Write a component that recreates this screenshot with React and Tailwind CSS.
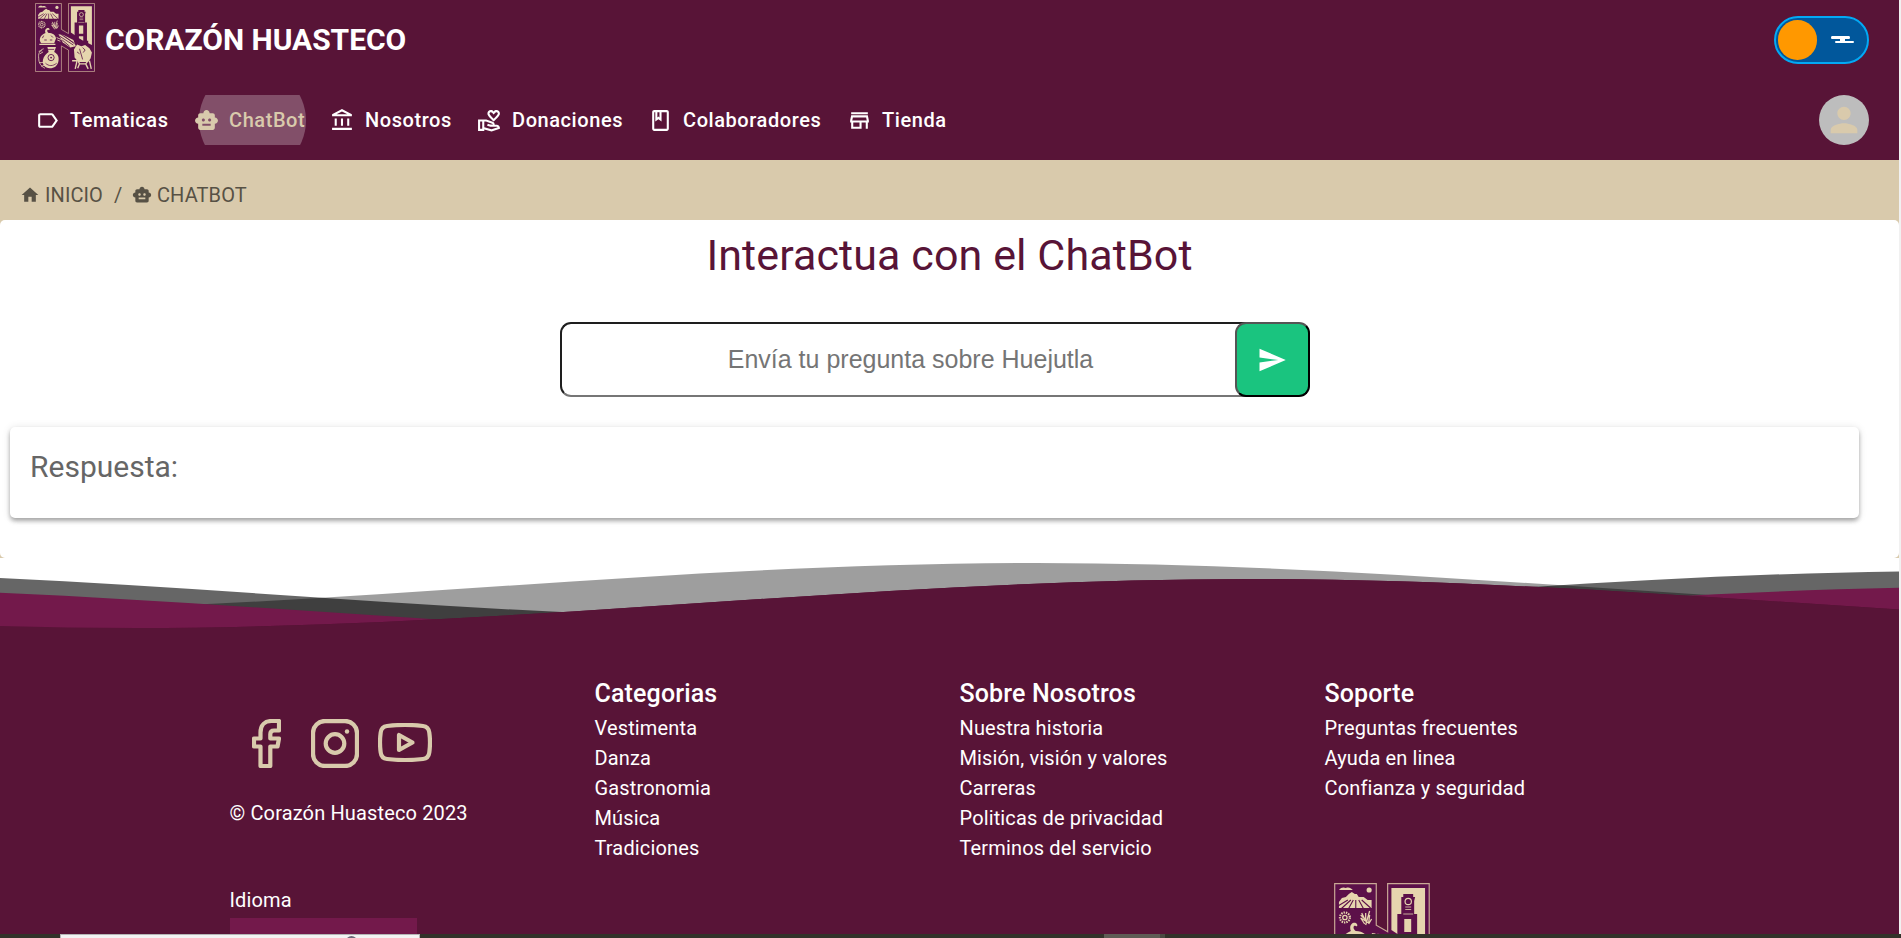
import React from "react";
import {
  MdOutlineLabel,
  MdSmartToy,
  MdOutlineAccountBalance,
  MdOutlineVolunteerActivism,
  MdOutlineClass,
  MdOutlineStore,
  MdSend,
  MdHome,
  MdPerson,
} from "react-icons/md";

const NAV = [
  { label: "Tematicas", Icon: MdOutlineLabel, width: "w-[159px]" },
  { label: "ChatBot", Icon: MdSmartToy, width: "w-[136px]", active: true },
  { label: "Nosotros", Icon: MdOutlineAccountBalance, width: "w-[147px]" },
  { label: "Donaciones", Icon: MdOutlineVolunteerActivism, width: "w-[171px]" },
  { label: "Colaboradores", Icon: MdOutlineClass, width: "w-[199px]" },
  { label: "Tienda", Icon: MdOutlineStore, width: "w-[120px]" },
];

const COLUMNS = [
  { title: "Categorias", links: ["Vestimenta", "Danza", "Gastronomia", "Música", "Tradiciones"] },
  {
    title: "Sobre Nosotros",
    links: ["Nuestra historia", "Misión, visión y valores", "Carreras", "Politicas de privacidad", "Terminos del servicio"],
  },
  { title: "Soporte", links: ["Preguntas frecuentes", "Ayuda en linea", "Confianza y seguridad"], logo: true },
];

function Logo({ className }) {
  const cream = "#e6d5ae";
  const dark = "#5c1049";
  return (
    <svg viewBox="0 0 97 110" preserveAspectRatio="none" className={className}>
      <path
        d="M.7.7h42v41.5l11.5 6.6V.7h42v108.6h-42V75L42.700 68.500v40.800h-42z"
        fill={dark}
        stroke="#c9a995"
        strokeWidth="1.2"
      />
      {/* sky, hills and furrows */}
      <path d="M5 7c2-3 5-3 7-2 3-1 5 0 7 2z" fill={cream} />
      <circle cx="35.500" cy="7" r="2.600" fill={cream} />
      <path d="M5 19l3-4 4-1 3-3 3-2 3 2 2 0 2 3 5 0 4 3 4 0v8H5z" fill={cream} />
      <path d="M17 17L7 26M19.500 17l-5 9M22 17v9M25 17l5 9M28 17l9 8M14 17L4 23" stroke={dark} strokeWidth="1.1" />
      {/* flower and leaf */}
      <circle cx="11" cy="34.500" r="5" fill="none" stroke={cream} strokeWidth="2.200" strokeDasharray="1.400 1" />
      <circle cx="11" cy="34.500" r="2.200" fill="none" stroke={cream} strokeWidth="1.300" />
      <path d="M36 28l-4 14M32 30v7l-5-5M36 32l-1 8-8-5 4 6M38 36l-3 5M28 30l4 8" stroke={cream} strokeWidth="1.300" fill="none" />
      {/* steaming pot */}
      <path d="M17 48c-2-5 1-9 5-8 3 2 1 4 0 3-3-1-3 3 0 5 6 0 11 3 12 8l-3 8H10c-4-4-3-12 7-16z" fill={cream} />
      <path d="M14 52l-2 4M26 52l3 3M15 59h4M24 59h4" stroke={dark} strokeWidth="1.300" />
      <path d="M7 66h26" stroke={cream} strokeWidth="2" />
      {/* decorated vase */}
      <path d="M20 70h14l-3 8c6 3 8 8 7 14-1 8-7 12-14 12-8 0-13-6-11-14 1-5 5-9 9-12z" fill={cream} />
      <circle cx="26" cy="87" r="5" fill="none" stroke={dark} strokeWidth="1.400" />
      <circle cx="26" cy="87" r="1.500" fill={dark} />
      <path d="M17 96c5 5 12 5 18 0M20 74h11" stroke={dark} strokeWidth="1.200" fill="none" />
      <path d="M14 73c-7 2-9 9-8 15M11 76l-5 1M8 81l5-3M6 88c0 8 4 13 10 16M7 95l6 0M10 101l6-2" stroke={cream} strokeWidth="1.300" fill="none" />
      {/* clock tower */}
      <path d="M58 5h34v62L78 60 58 47z" fill={cream} />
      <path d="M68 14h2v-3h10v3h2l-1 4v13h3v29h2v7l-22-13V31h4V18z" fill={dark} />
      <circle cx="75" cy="18.500" r="3.200" fill="none" stroke={cream} strokeWidth="1.200" />
      <path d="M72 24h6M72 26.500h6M70 31h10" stroke={cream} strokeWidth=".8" />
      <path d="M71 36h7v13h-7zM71 53h7v7l-7-4z" fill={cream} />
      {/* woven band across the centre */}
      <path d="M38 50l8 1 16 8 4 10-9 2-12-8z" fill={cream} />
      <path d="M40 53l22 14M46 52l18 13M44 59l12 10M42 50l20 13" stroke={dark} strokeWidth="1.300" />
      <path d="M35 55l7 3M36 59l5 2" stroke={cream} strokeWidth="1.400" />
      {/* drum */}
      <path d="M63 74l5-8 7 3 6-2 7 5 4 7-2 9-4 6H70l-6-7z" fill={cream} />
      <path d="M72 73l5 17M77 71l4 4-3 4M68 78l4 3" stroke={dark} strokeWidth="1.300" fill="none" />
      <path d="M60 92h8l-3 13M70 93l2 4 10 0 3-4M88 92l3 13M72 97l-3 7M82 97l4 8" stroke={cream} strokeWidth="2.200" fill="none" />
    </svg>
  );
}

function Header() {
  return (
    <header className="h-[160px] bg-[#581437] text-white">
      <div className="flex h-20 items-center justify-between pl-[35px] pr-[30px]">
        <div className="flex items-center">
          <Logo className="-mt-[6px] h-[69px] w-[60px]" />
          <span className="ml-[10px] whitespace-nowrap text-[30px] font-bold leading-[40px] tracking-[-0.04px]">
            CORAZÓN HUASTECO
          </span>
        </div>
        <button className="flex h-12 w-[95px] items-center justify-between rounded-full border-2 border-[#03a9f4] bg-[#01579b] pl-[2px] pr-[13px]">
          <span className="h-10 w-[39px] rounded-full bg-[#ff9800]" />
          <svg viewBox="0 0 23 8" className="h-2 w-[23px]">
            <path d="M1 0h17q1 0 1 1.500t-1 1.500h-4v2h8q1 0 1 1t-1 1H5q-1 0-1-1t1-1h4V3H1q-1 0-1-1.500T1 0z" fill="#fff" />
          </svg>
        </button>
      </div>
      <div className="flex h-20 items-center justify-between pl-[35px] pr-[30px]">
        <nav className="flex">
          {NAV.map(({ label, Icon, width, active }) => (
            <a
              key={label}
              className={`relative flex h-[50px] items-center gap-[10px] whitespace-nowrap text-[20px] font-medium tracking-[0.57px] ${width} ${
                active ? "text-[#d9caac]" : "text-white"
              }`}
            >
              {active && (
                <span className="absolute left-[5px] top-0 flex h-[50px] w-[107px] items-center overflow-hidden">
                  <span className="h-[107px] w-[107px] shrink-0 rounded-full bg-white/25" />
                </span>
              )}
              <Icon size={25} className="relative shrink-0" />
              <span className="relative">{label}</span>
            </a>
          ))}
        </nav>
        <button className="flex h-[50px] w-[50px] items-center justify-center rounded-full bg-[#bdbdbd] text-[#d9caac]">
          <MdPerson size={40} />
        </button>
      </div>
    </header>
  );
}

function Breadcrumb() {
  return (
    <div className="flex h-[60px] items-center whitespace-nowrap pl-5 pt-[10px] text-[20px] tracking-[0.1px] text-[#575145]">
      <MdHome size={20} className="mr-[5px]" />
      <span className="w-[69px]">INICIO</span>
      <span className="w-[18px]">/</span>
      <MdSmartToy size={20} className="mr-[5px]" />
      <span>CHATBOT</span>
    </div>
  );
}

function Chat() {
  return (
    <main className="h-[338px] rounded-[5px] bg-white px-[10px] pt-[10px]">
      <h1 className="text-center text-[43px] leading-[50px] tracking-[0.1px] text-[#581437]">Interactua con el ChatBot</h1>
      <div className="ml-[550px] mt-[42px] flex h-[75px] w-[750px]">
        <input
          className="-mr-[14px] h-[75px] w-[689px] rounded-l-[11px] border-2 border-b-[#767676] border-l-[#1e1e1e] border-r-[#767676] border-t-[#1e1e1e] bg-white pl-[12px] text-center font-['Liberation_Sans',sans-serif] text-[25px] text-black outline-none placeholder:text-[#757575]"
          placeholder="Envía tu pregunta sobre Huejutla"
        />
        <button className="relative flex h-[75px] w-[75px] items-center justify-center rounded-[11px] border-2 border-b-black border-l-[#555] border-r-black border-t-[#555] bg-[#1ac47f] pr-[2px] text-white">
          <MdSend size={30} />
        </button>
      </div>
      <section className="mt-[30px] h-[91px] w-[1849px] rounded-[5px] bg-white px-5 pt-5 shadow-[0_3px_5px_-1px_rgba(0,0,0,0.2),0_3px_4px_0_rgba(0,0,0,0.16),0_1px_9px_0_rgba(0,0,0,0.12)]">
        <h2 className="text-[30px] leading-[40px] text-[#666]">Respuesta:</h2>
      </section>
    </main>
  );
}

/* Each crest spans 2228px; the layers differ in phase and height. */
function Waves() {
  const wave = "M-1114 49C-734 49-380 0 0 0S734 49 1114 49 1848 0 2228 0s734 49 1114 49V160H-1114z";
  return (
    <svg viewBox="0 0 1899 82" className="block h-[82px] w-full overflow-hidden">
      <path d={wave} transform="translate(1037 5)" fill="#000" fillOpacity=".38" />
      <path d={wave} transform="translate(-268 13)" fill="#000" fillOpacity=".6" />
      <path d={wave} transform="translate(-240 29)" fill="#73194b" />
      <path d={wave} transform="translate(1250 21)" fill="#581437" />
      <path d={wave} transform="translate(-978 21)" fill="#581437" />
    </svg>
  );
}

function Socials() {
  return (
    <div className="ml-[22px] flex h-[49px] items-center">
      <svg viewBox="0 0 29 49" className="h-[49px] w-[29px]" fill="none" stroke="#d9caac" strokeWidth="4.2" strokeLinejoin="round">
        <path d="M27 2v9.500h-5c-2.500 0-3.700 1.300-3.700 3.800V19.500H27l-1.500 8h-7.200V47H8.500V27.500H2v-8h6.500v-6C8.500 6 13 2 19.500 2z" />
      </svg>
      <svg viewBox="0 0 48 49" className="ml-[30px] h-[49px] w-[48px]" fill="none" stroke="#d9caac">
        <rect x="2" y="2" width="44" height="45" rx="12" strokeWidth="4.300" />
        <circle cx="24" cy="24.500" r="9.300" strokeWidth="4.200" />
        <circle cx="36" cy="12.500" r="2.200" fill="#d9caac" stroke="none" />
      </svg>
      <svg viewBox="0 0 54 39" className="ml-[19px] h-[39px] w-[54px] -translate-y-px" fill="none" stroke="#d9caac" strokeWidth="4.2" strokeLinejoin="round">
        <path d="M9 3c11-1.300 25-1.300 36 0 4 .5 5.800 2.500 6.300 6.500.9 6.500.9 13.500 0 20-.5 4-2.300 6-6.300 6.500-11 1.300-25 1.300-36 0-4-.5-5.800-2.500-6.300-6.500-.9-6.500-.9-13.500 0-20C3.200 5.500 5 3.500 9 3z" />
        <path d="M21 12v15l13.500-7.500z" />
      </svg>
    </div>
  );
}

function Footer() {
  return (
    <footer className="flex h-[294px] overflow-hidden bg-[#581437] pl-[229.5px] text-[20px] leading-[30px] tracking-[0.14px] text-white">
      <div className="w-[365px] shrink-0 pt-[79px]">
        <Socials />
        <p className="mt-[30px] whitespace-nowrap">© Corazón Huasteco 2023</p>
        <p className="mt-[57px]">Idioma</p>
        <div className="mt-[3px] h-[45px] w-[187px] bg-[#73194b]" />
      </div>
      {COLUMNS.map(({ title, links, logo }) => (
        <div key={title} className="w-[365px] shrink-0 whitespace-nowrap pt-[39px]">
          <h3 className="mb-[4px] text-[25px] font-medium leading-[30px]">{title}</h3>
          <ul>
            {links.map((link) => (
              <li key={link}>{link}</li>
            ))}
          </ul>
          {logo && <Logo className="ml-[9px] mt-[80px] h-[110px] w-[96px]" />}
        </div>
      ))}
    </footer>
  );
}

function Taskbar() {
  return (
    <div className="flex h-1 bg-[#33322a] pl-[60px]">
      <div className="flex h-1 w-[360px] justify-end overflow-hidden border-x border-t border-[#b5b5b5] bg-[#f3f3f3] pr-[62px] pt-px">
        <span className="h-2 w-[11px] rounded-t-full bg-[#6c6878]" />
      </div>
      <div className="ml-[684px] h-1 w-[56px] bg-[#5f5c55]" />
      <div className="h-1 w-[5px] bg-[#4b4a42]" />
    </div>
  );
}

export default function App() {
  return (
    <div className="h-[938px] w-full overflow-hidden bg-[#f1f1f1] font-[Roboto,sans-serif]">
      <div className="h-[934px] w-[1899px] overflow-hidden bg-white">
        <Header />
        <div className="h-[398px] bg-[#d9caac]">
          <Breadcrumb />
          <Chat />
        </div>
        <Waves />
        <Footer />
      </div>
      <Taskbar />
    </div>
  );
}
